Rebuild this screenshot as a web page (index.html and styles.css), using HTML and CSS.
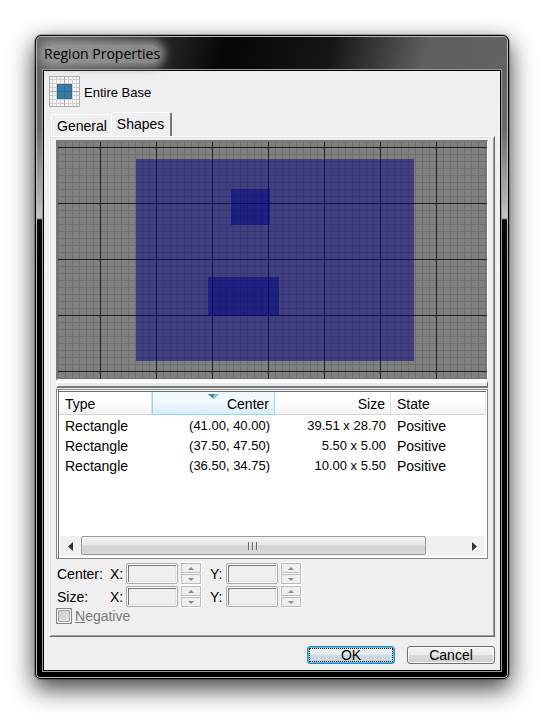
FILE: index.html
```html
<!DOCTYPE html>
<html lang="en">
<head>
<meta charset="utf-8">
<title>Region Properties</title>
<link rel="stylesheet" href="styles.css">
</head>
<body>
<main class="window">
  <header class="titlebar"><h1 class="title">Region Properties</h1></header>
  <div class="client">
    <div class="region">
      <svg class="region-icon" width="31" height="31" viewBox="0 0 31 31" aria-hidden="true">
        <rect width="31" height="31" fill="#f4f4f4"/>
        <path d="M3.5 0V31M7.5 0V31M11.5 0V31M19.5 0V31M23.5 0V31M27.5 0V31M0 3.500H31M0 7.500H31M0 11.500H31M0 19.500H31M0 23.500H31M0 27.500H31" stroke="#cfcfcf"/>
        <path d="M.5 .5H30.500V30.500H.5ZM15.500 0V31M0 15.500H31" fill="none" stroke="#aaa"/>
        <rect x="8" y="8" width="15" height="15" rx="1" fill="#367ba5"/>
        <path d="M8.500 8.500H22.500V22.500H8.500ZM15.500 8V23M8 15.500H23" fill="none" stroke="#2c6c92"/>
      </svg>
      <span>Entire Base</span>
    </div>
    <div class="tabs" role="tablist">
      <button class="tab" type="button" role="tab" aria-selected="false">General</button>
      <button class="tab tab-active" type="button" role="tab" aria-selected="true">Shapes</button>
    </div>
    <section class="panel">
      <div class="map">
        <svg class="map-canvas" width="100%" height="237" aria-hidden="true" shape-rendering="crispEdges">
          <defs>
            <pattern id="minor" width="7" height="7" patternUnits="userSpaceOnUse" y="5">
              <path d="M0 0H7V1H1V7H0Z" fill="#6f6f6f"/>
            </pattern>
            <pattern id="major" width="56" height="56" patternUnits="userSpaceOnUse" x="42" y="5">
              <path d="M0 0H56V1H1V56H0Z" fill="#1c1c1c"/>
            </pattern>
          </defs>
          <rect width="100%" height="100%" fill="#808080"/>
          <rect width="100%" height="100%" fill="url(#minor)"/>
          <rect width="100%" height="100%" fill="url(#major)"/>
          <g fill="#000080" fill-opacity=".5">
            <rect x="78" y="17" width="278" height="202"/>
            <rect x="173" y="47" width="39" height="36"/>
            <rect x="150" y="135" width="71" height="39"/>
          </g>
        </svg>
      </div>
      <div class="splitter"></div>
      <div class="list">
        <table class="shapes">
          <colgroup><col class="col-type"><col class="col-center"><col class="col-size"><col></colgroup>
          <thead>
            <tr><th>Type</th><th class="num sorted">Center<svg class="sort" width="11" height="5" viewBox="0 0 11 5" aria-hidden="true"><path d="M0 0H11L5.500 5Z" fill="#86b6d0"/><path d="M0 0H6L5 4Z" fill="#477f9c"/></svg></th><th class="num">Size</th><th>State</th></tr>
          </thead>
          <tbody>
            <tr><td>Rectangle</td><td class="num">(41.00, 40.00)</td><td class="num">39.51 x 28.70</td><td>Positive</td></tr>
            <tr><td>Rectangle</td><td class="num">(37.50, 47.50)</td><td class="num">5.50 x 5.00</td><td>Positive</td></tr>
            <tr><td>Rectangle</td><td class="num">(36.50, 34.75)</td><td class="num">10.00 x 5.50</td><td>Positive</td></tr>
          </tbody>
        </table>
        <div class="scrollbar">
          <button class="scroll-arrow" type="button" aria-label="Scroll left"><svg width="5" height="9" viewBox="0 0 5 9"><path d="M5 0V9L0 4.500Z" fill="#333"/></svg></button>
          <div class="scroll-track"><div class="scroll-thumb"><i class="grip"></i><i class="grip"></i><i class="grip"></i></div></div>
          <button class="scroll-arrow" type="button" aria-label="Scroll right"><svg width="5" height="9" viewBox="0 0 5 9"><path d="M0 0V9L5 4.500Z" fill="#333"/></svg></button>
        </div>
      </div>
      <div class="fields">
        <span>Center:</span>
        <label for="cx">X:</label><input id="cx" type="text" disabled>
        <span class="spin"><button type="button" disabled aria-label="Increase center X"><svg width="6" height="3" viewBox="0 0 6 3"><path d="M3 0L6 3H0Z"/></svg></button><button type="button" disabled aria-label="Decrease center X"><svg width="6" height="3" viewBox="0 0 6 3"><path d="M0 0H6L3 3Z"/></svg></button></span>
        <label for="cy">Y:</label><input id="cy" type="text" disabled>
        <span class="spin"><button type="button" disabled aria-label="Increase center Y"><svg width="6" height="3" viewBox="0 0 6 3"><path d="M3 0L6 3H0Z"/></svg></button><button type="button" disabled aria-label="Decrease center Y"><svg width="6" height="3" viewBox="0 0 6 3"><path d="M0 0H6L3 3Z"/></svg></button></span>
        <span>Size:</span>
        <label for="sx">X:</label><input id="sx" type="text" disabled>
        <span class="spin"><button type="button" disabled aria-label="Increase size X"><svg width="6" height="3" viewBox="0 0 6 3"><path d="M3 0L6 3H0Z"/></svg></button><button type="button" disabled aria-label="Decrease size X"><svg width="6" height="3" viewBox="0 0 6 3"><path d="M0 0H6L3 3Z"/></svg></button></span>
        <label for="sy">Y:</label><input id="sy" type="text" disabled>
        <span class="spin"><button type="button" disabled aria-label="Increase size Y"><svg width="6" height="3" viewBox="0 0 6 3"><path d="M3 0L6 3H0Z"/></svg></button><button type="button" disabled aria-label="Decrease size Y"><svg width="6" height="3" viewBox="0 0 6 3"><path d="M0 0H6L3 3Z"/></svg></button></span>
      </div>
      <div class="negative">
        <input id="neg" type="checkbox" disabled><label for="neg"><u>N</u>egative</label>
      </div>
    </section>
    <footer class="actions">
      <button class="btn btn-default" type="button">OK</button>
      <button class="btn" type="button">Cancel</button>
    </footer>
  </div>
</main>
</body>
</html>
```
FILE: styles.css
```css
* { box-sizing: border-box; }

body {
  margin: 0;
  padding: 35px;
  background: #fff;
  color: #000;
  font: 14px/16px "Liberation Sans", Arial, sans-serif;
}

button, input { margin: 0; font: inherit; color: inherit; }
svg { display: block; }

.window {
  border: 1px solid #000;
  border-radius: 6px 6px 5px 5px;
  padding: 0 7px 7px;
  background:
    linear-gradient(105deg, #666 0, #444 15%, #060606 40%, #161616 62%, #5f5f5f 82%, #636363 100%) 0 0 / 100% 34px no-repeat,
    linear-gradient(#646464 34px, #6a6a6a 90px, #c4c4c4 182px, #0c0c0c 184px, #000 260px);
  box-shadow: inset 0 0 0 1px #bbb, 0 0 1px 1px rgba(0, 0, 0, .25), 0 9px 24px 1px rgba(0, 0, 0, .75);
}

.titlebar { height: 34px; padding: 9px 1px 0; }

.title {
  display: inline-block;
  margin: 0;
  border-radius: 8px;
  background: rgba(160, 160, 160, .8);
  box-shadow: 0 0 8px 5px rgba(160, 160, 160, .8);
  font: 14px/18px "Open Sans", "Noto Sans", sans-serif;
}

.client {
  border: 1px solid #000;
  padding: 5px 5px 6px;
  background: #efefef;
  box-shadow: 0 0 0 1px #999;
}

.region {
  display: flex;
  align-items: center;
  gap: 4px;
  padding-bottom: 5px;
  line-height: 18px;
}

.region span { padding-top: 2px; font-size: 13px; }

.tabs { display: flex; align-items: flex-end; padding-left: 2px; }

.tab {
  height: 22px;
  padding: 0 4px 0 5px;
  border: solid #fff;
  border-width: 1px 0 0 1px;
  border-radius: 2px 2px 0 0;
  background: #efefef;
}

.tab-active {
  height: 24px;
  padding: 0 6px 2px 5px;
  border-width: 1px 2px 0 1px;
  border-right-color: #777;
}

.panel {
  padding: 3px 6px 12px;
  border: 1px solid;
  border-color: #fff #696969 #696969 #fff;
  box-shadow: inset 1px 1px #e3e3e3, inset -1px -1px #a0a0a0;
}

.map {
  border: solid;
  border-width: 2px 1px 1px 2px;
  border-color: #777 #fff #fff #777;
}

.splitter {
  height: 7px;
  margin: 1px 0;
  border: solid;
  border-width: 2px 1px 2px 2px;
  border-color: #fff #696969 #777 #fff;
  background: #e8e8e8;
}

.list {
  display: flex;
  flex-direction: column;
  min-height: 170px;
  padding: 1px 1px 1px 2px;
  border: 1px solid #828790;
  background: #fff;
  box-shadow: inset 1px 0 #fff, inset 2px 0 #696969;
}

.shapes {
  width: 100%;
  border-collapse: separate;
  border-spacing: 0;
  border-top: 1px solid #696969;
  table-layout: fixed;
}

.col-type { width: 93px; }
.col-center { width: 123px; }
.col-size { width: 116px; }

th {
  height: 23px;
  padding: 1px 6px 0;
  border-right: 1px solid #dfe1e4;
  border-bottom: 1px solid #d5d5d5;
  background: linear-gradient(#fff 40%, #f2f3f5);
  font-weight: normal;
  text-align: left;
}

td { height: 20px; padding: 1px 6px 0; white-space: nowrap; }
.num { padding-right: 5px; text-align: right; }
td.num { font-size: 13px; }

.sorted {
  position: relative;
  border: 1px solid #96d9f9;
  border-top: 0;
  background: linear-gradient(#f2f9fc 45%, #d8ecf6);
}

.sort { position: absolute; top: 2px; left: calc(50% - 6px); }

.scrollbar {
  display: flex;
  height: 20px;
  margin: auto 1px 1px 1px;
  background: #f0f0f0;
}

.scroll-arrow {
  display: grid;
  place-items: center;
  width: 21px;
  padding: 0;
  border: 0;
  background: none;
}

.scroll-track { flex: 1; padding-right: 9%; }

.scroll-thumb {
  display: flex;
  align-items: center;
  justify-content: center;
  gap: 2px;
  height: 19px;
  border: 1px solid #999;
  border-radius: 2px;
  background: linear-gradient(#f3f3f3, #e6e6e8 48%, #d0d1d4 52%, #d9d9db);
}

.grip { width: 2px; height: 8px; border-left: 1px solid #666; background: #eee; }

.fields {
  display: grid;
  grid-template-columns: 53px 16px 52px 26px 22px 52px 23px;
  align-items: center;
  justify-content: start;
  row-gap: 2px;
  padding: 4px 1px 1px;
}

.fields .spin + label { padding-left: 6px; }

.fields input {
  width: 100%;
  height: 21px;
  border: 1px solid #aaa;
  border-radius: 2px;
  background: #efefef;
  box-shadow: inset 0 0 0 1px #fff, inset 2px 2px #777, inset -2px -2px #e0e0e0;
}

.spin {
  display: grid;
  gap: 1px;
  width: 20px;
  height: 21px;
  margin-left: 3px;
}

.spin button {
  display: grid;
  place-items: center;
  padding: 0;
  border: 1px solid #bbb;
  background: #efefef;
  outline: 1px solid #fff;
  fill: #888;
}

.negative { display: flex; align-items: center; gap: 3px; color: #777; }

.negative input {
  appearance: none;
  width: 16px;
  height: 16px;
  border: 1px solid #888;
  background: linear-gradient(135deg, #c8c8c8, #e8e8e8);
  box-shadow: inset 0 0 0 1px #f4f4f4, inset 0 0 0 2px #aaa;
}

.actions { display: flex; justify-content: flex-end; gap: 12px; padding-top: 9px; }

.btn {
  width: 88px;
  height: 18px;
  padding: 0;
  border: 1px solid #707070;
  border-radius: 3px;
  background: linear-gradient(#f4f4f4, #ebebeb 48%, #dadada 52%, #cfcfcf);
  box-shadow: inset 0 0 0 1px #fafafa;
  line-height: 16px;
}

.btn-default {
  border-color: #3c7fb1;
  background: linear-gradient(#edf3f6, #e3ebef 48%, #cfdbe2 52%, #c4d3dc);
  box-shadow: inset 0 0 0 1px #3fc8f4;
  outline: 1px dotted #000;
  outline-offset: -3px;
}
```
